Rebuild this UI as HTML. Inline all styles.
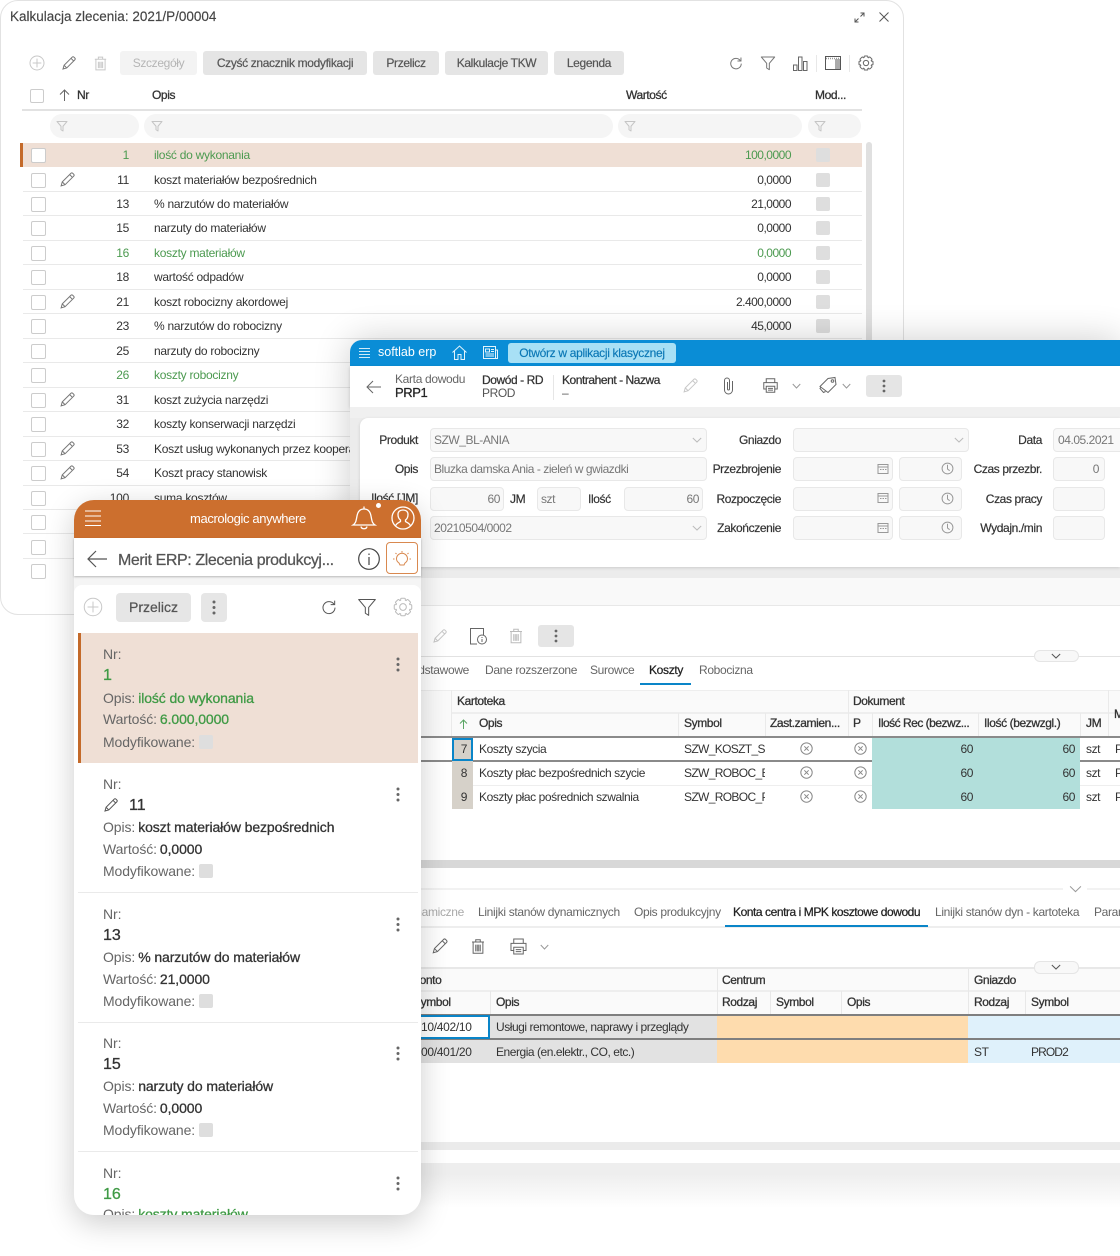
<!DOCTYPE html>
<html lang="pl"><head><meta charset="utf-8"><title>Kalkulacja zlecenia</title>
<style>
html,body{margin:0;padding:0;background:#fff}
body{position:relative;width:1120px;height:1256px;overflow:hidden;font-family:"Liberation Sans",sans-serif;font-size:12px;color:#333;letter-spacing:-.27px}
symbol *{vector-effect:non-scaling-stroke;stroke-width:1px}
.t{position:absolute;white-space:nowrap;line-height:14px;letter-spacing:-.42px}
.m{-webkit-text-stroke:.25px currentColor}
.g{color:#4c9a50}
.b{position:absolute}
.i{position:absolute;color:#777;overflow:visible}
.btn{position:absolute;top:51px;height:24px;line-height:24px;background:#e5e5e5;border-radius:3px;text-align:center;color:#555;-webkit-text-stroke:.2px #555;letter-spacing:-.35px}
.pill{position:absolute;top:114px;height:24px;background:#f5f5f5;border-radius:12px}
.r{position:absolute;left:23px;width:839px;height:24.47px;box-sizing:border-box;border-bottom:1px solid #e9e9e9}
.r .cb{position:absolute;left:8px;top:5px;width:13px;height:13px;border:1px solid #ccc;border-radius:2px;background:#fff}
.r .n{position:absolute;right:733px;top:5px;line-height:14px}
.r .o{position:absolute;left:131px;top:5px;line-height:14px;white-space:nowrap}
.r .v{position:absolute;right:71px;top:5px;line-height:14px;letter-spacing:-.5px}
.r .c{position:absolute;left:793px;top:5px;width:14px;height:14px;background:#dedede;border-radius:2px}
.r svg{position:absolute;left:36px;top:3px;width:17px;height:17px;color:#777}
.f{position:absolute;box-sizing:border-box;background:#f8f8f8;border:1px solid #e8e8e8;border-radius:4px;color:#777;line-height:22px;padding:0 3px;white-space:nowrap;letter-spacing:-.45px}
.l{position:absolute;white-space:nowrap;line-height:14px;color:#333;-webkit-text-stroke:.2px #333;letter-spacing:-.38px}
.tab{position:absolute;white-space:nowrap;line-height:14px;color:#666;letter-spacing:-.33px}
.h{position:absolute;white-space:nowrap;line-height:14px;color:#333;-webkit-text-stroke:.3px #333;letter-spacing:-.4px}
.lb{position:absolute;left:103px;white-space:nowrap;line-height:18px;font-size:14px;color:#666;letter-spacing:-.1px}
.lb span{color:#333;margin-left:3px;-webkit-text-stroke:.3px #333}
.lb .g{color:#3f9a45;-webkit-text-stroke:.3px #3f9a45}
.lb i{display:inline-block;width:14px;height:14px;background:#dedede;border-radius:2px;vertical-align:-2px;margin-left:4px}
.nv{position:absolute;left:103px;white-space:nowrap;line-height:20px;font-size:16px;color:#333;-webkit-text-stroke:.3px #333;letter-spacing:0}
.sep{position:absolute;left:78px;width:340px;height:1px;background:#eaeaea}
</style></head><body>
<svg width="0" height="0" style="position:absolute"><defs>
<symbol id="pen" viewBox="0 0 24 24"><path d="M3 21l1.600-5.600L16.700 3.300a2 2 0 0 1 2.800 0l1.200 1.200a2 2 0 0 1 0 2.800L8.600 19.400zM15 5l4 4M4.600 15.400l4 4" fill="none" stroke="currentColor"/></symbol>
<symbol id="trash" viewBox="0 0 24 24"><path d="M4 6h16M9 6V3h6v3M5.500 6v15h13V6M9 9.500v9M11 9.500v9M13 9.500v9M15 9.500v9" fill="none" stroke="currentColor"/></symbol>
<symbol id="plus" viewBox="0 0 24 24"><circle cx="12" cy="12" r="10.500" fill="none" stroke="currentColor"/><path d="M12 5.500v13M5.500 12h13" stroke="currentColor"/></symbol>
<symbol id="fil" viewBox="0 0 24 24"><path d="M2 3h20l-8 9.500V22l-4-2.500v-7z" fill="none" stroke="currentColor" stroke-linejoin="round"/></symbol>
<symbol id="ref" viewBox="0 0 24 24"><path d="M19.500 8A9 9 0 1 0 21 13" fill="none" stroke="currentColor"/><path d="M20.500 2.500V8.500H14.500" fill="none" stroke="currentColor"/></symbol>
<symbol id="gear" viewBox="0 0 24 24"><g fill="#fff" stroke="currentColor"><rect x="9.200" y="1.500" width="5.600" height="21" rx="1.200"/><rect x="9.200" y="1.500" width="5.600" height="21" rx="1.200" transform="rotate(45 12 12)"/><rect x="9.200" y="1.500" width="5.600" height="21" rx="1.200" transform="rotate(90 12 12)"/><rect x="9.200" y="1.500" width="5.600" height="21" rx="1.200" transform="rotate(135 12 12)"/></g><circle cx="12" cy="12" r="8" fill="#fff" stroke="none"/><circle cx="12" cy="12" r="4" fill="none" stroke="currentColor"/></symbol>
<symbol id="chev" viewBox="0 0 24 24" preserveAspectRatio="none"><path d="M2 4l10 16L22 4" fill="none" stroke="currentColor"/></symbol>
<symbol id="print" viewBox="0 0 24 24"><path d="M6 8V2.500h12V8M6 17H2.500V8h19v9H18M6 13h12v8.500H6zM8.500 16h7M8.500 18.500h7" fill="none" stroke="currentColor"/></symbol>
<symbol id="cal" viewBox="0 0 24 24"><path d="M2 3h20v18H2zM2 8h20" fill="none" stroke="currentColor"/><path d="M6 12h3v2H6zM11 12h3v2h-3zM16 12h3v2h-3z" fill="currentColor" stroke="none"/></symbol>
<symbol id="clk" viewBox="0 0 24 24"><circle cx="12" cy="12" r="10" fill="none" stroke="currentColor"/><path d="M12 5v8l4 3" fill="none" stroke="currentColor"/></symbol>
<symbol id="cx" viewBox="0 0 24 24"><circle cx="12" cy="12" r="10.500" fill="none" stroke="currentColor"/><path d="M8 8l8 8M16 8l-8 8" stroke="currentColor"/></symbol>
</defs></svg>

<!-- WINDOW 1 -->
<div class="b" style="left:0;top:0;width:904px;height:615px;box-sizing:border-box;border:1.500px solid #e2e2e2;border-radius:18px;background:#fff"></div>
<div class="t" style="left:10px;top:10px;font-size:13.500px;letter-spacing:0;color:#444;-webkit-text-stroke:.15px #444">Kalkulacja zlecenia: 2021/P/00004</div>
<svg class="i" style="left:854px;top:12px;width:11px;height:11px;color:#555" viewBox="0 0 11 11"><path d="M6.500 1H10V4.500M10 1L6.500 4.500M4.500 10H1V6.500M1 10L4.500 6.500" fill="none" stroke="currentColor"/></svg>
<svg class="i" style="left:879px;top:12px;width:10px;height:10px;color:#555" viewBox="0 0 10 10"><path d="M.5.500l9 9M9.500.500l-9 9" stroke="currentColor"/></svg>
<svg class="i" style="left:29px;top:55px;width:16px;height:16px;color:#c8c8c8"><use href="#plus"/></svg>
<svg class="i" style="left:61px;top:55px;width:16px;height:16px"><use href="#pen"/></svg>
<svg class="i" style="left:92px;top:55px;width:17px;height:17px;color:#c8c8c8"><use href="#trash"/></svg>
<div class="btn" style="left:120px;width:77px;background:#f3f3f3;color:#b5b5b5;-webkit-text-stroke:0">Szczegóły</div>
<div class="btn" style="left:203px;width:164px">Czyść znacznik modyfikacji</div>
<div class="btn" style="left:373px;width:66px">Przelicz</div>
<div class="btn" style="left:445px;width:103px">Kalkulacje TKW</div>
<div class="btn" style="left:554px;width:70px">Legenda</div>
<svg class="i" style="left:729px;top:56px;width:14px;height:14px"><use href="#ref"/></svg>
<svg class="i" style="left:760px;top:55px;width:16px;height:16px"><use href="#fil"/></svg>
<svg class="i" style="left:793px;top:56px;width:15px;height:15px;color:#666" viewBox="0 0 15 15"><path d="M.5 9h3.500v5.500H.5zM5.500 1h3.500v13.500H5.500zM10.500 5.500h3.500v9h-3.500z" fill="none" stroke="currentColor"/></svg>
<div class="b" style="left:816px;top:55px;width:1px;height:17px;background:#e8e8e8"></div>
<svg class="i" style="left:825px;top:56px;width:16px;height:14px;color:#555" viewBox="0 0 16 14"><rect x=".5" y=".5" width="15" height="13" fill="#fff" stroke="currentColor"/><rect x="10" y="3" width="5" height="10" fill="#aaa"/><path d="M1 2.500h14" stroke="#999" stroke-width="1.500" stroke-dasharray="1 1"/></svg>
<div class="b" style="left:849px;top:55px;width:1px;height:17px;background:#e8e8e8"></div>
<svg class="i" style="left:858px;top:55px;width:16px;height:16px;color:#666"><use href="#gear"/></svg>

<div class="b" style="left:30px;top:89px;width:14px;height:14px;box-sizing:border-box;border:1px solid #ccc;border-radius:2px"></div>
<svg class="i" style="left:59px;top:89px;width:11px;height:12px;color:#666" viewBox="0 0 11 12"><path d="M5.500 12V1M1 5.500l4.500-4.500 4.500 4.500" fill="none" stroke="currentColor"/></svg>
<div class="h" style="left:77px;top:88px">Nr</div>
<div class="h" style="left:152px;top:88px">Opis</div>
<div class="h" style="left:626px;top:88px">Wartość</div>
<div class="h" style="left:815px;top:88px">Mod...</div>
<div class="b" style="left:22px;top:109px;width:840px;height:2px;background:#e2e2e2"></div>
<div class="pill" style="left:50px;width:89px"></div>
<div class="pill" style="left:144px;width:469px"></div>
<div class="pill" style="left:618px;width:184px"></div>
<div class="pill" style="left:808px;width:53px"></div>
<svg class="i" style="left:56px;top:120px;width:12px;height:12px;color:#c5c5c5"><use href="#fil"/></svg>
<svg class="i" style="left:151px;top:120px;width:12px;height:12px;color:#c5c5c5"><use href="#fil"/></svg>
<svg class="i" style="left:624px;top:120px;width:12px;height:12px;color:#c5c5c5"><use href="#fil"/></svg>
<svg class="i" style="left:814px;top:120px;width:12px;height:12px;color:#c5c5c5"><use href="#fil"/></svg>

<div class="b" style="left:20px;top:143px;width:842px;height:24px;background:#efdfd5"></div>
<div class="b" style="left:20px;top:143px;width:3px;height:24px;background:#c46a2a"></div>
<div class="r g" style="top:143px;border:0"><div class="cb"></div><div class="n">1</div><div class="o">ilość do wykonania</div><div class="v">100,0000</div><div class="c"></div></div>
<div class="r" style="top:167.500px"><div class="cb"></div><svg><use href="#pen"/></svg><div class="n">11</div><div class="o">koszt materiałów bezpośrednich</div><div class="v">0,0000</div><div class="c"></div></div>
<div class="r" style="top:192px"><div class="cb"></div><div class="n">13</div><div class="o">% narzutów do materiałów</div><div class="v">21,0000</div><div class="c"></div></div>
<div class="r" style="top:216.400px"><div class="cb"></div><div class="n">15</div><div class="o">narzuty do materiałów</div><div class="v">0,0000</div><div class="c"></div></div>
<div class="r g" style="top:240.900px"><div class="cb"></div><div class="n">16</div><div class="o">koszty materiałów</div><div class="v">0,0000</div><div class="c"></div></div>
<div class="r" style="top:265.400px"><div class="cb"></div><div class="n">18</div><div class="o">wartość odpadów</div><div class="v">0,0000</div><div class="c"></div></div>
<div class="r" style="top:289.800px"><div class="cb"></div><svg><use href="#pen"/></svg><div class="n">21</div><div class="o">koszt robocizny akordowej</div><div class="v">2.400,0000</div><div class="c"></div></div>
<div class="r" style="top:314.300px"><div class="cb"></div><div class="n">23</div><div class="o">% narzutów do robocizny</div><div class="v">45,0000</div><div class="c"></div></div>
<div class="r" style="top:338.800px"><div class="cb"></div><div class="n">25</div><div class="o">narzuty do robocizny</div><div class="c"></div></div>
<div class="r g" style="top:363.200px"><div class="cb"></div><div class="n">26</div><div class="o">koszty robocizny</div></div>
<div class="r" style="top:387.700px"><div class="cb"></div><svg><use href="#pen"/></svg><div class="n">31</div><div class="o">koszt zużycia narzędzi</div></div>
<div class="r" style="top:412.200px"><div class="cb"></div><div class="n">32</div><div class="o">koszty konserwacji narzędzi</div></div>
<div class="r" style="top:436.600px"><div class="cb"></div><svg><use href="#pen"/></svg><div class="n">53</div><div class="o">Koszt usług wykonanych przez kooperantów</div></div>
<div class="r" style="top:461.100px"><div class="cb"></div><svg><use href="#pen"/></svg><div class="n">54</div><div class="o">Koszt pracy stanowisk</div></div>
<div class="r" style="top:485.600px"><div class="cb"></div><div class="n">100</div><div class="o">suma kosztów</div></div>
<div class="r" style="top:510px"><div class="cb"></div></div>
<div class="r" style="top:534.500px"><div class="cb"></div></div>
<div class="r" style="top:559px;border:0"><div class="cb"></div></div>
<div class="b" style="left:866px;top:142px;width:6px;height:230px;background:#e0e0e0;border-radius:3px"></div>

<!-- WINDOW 2 -->
<div class="b" style="left:350px;top:340px;width:770px;height:823px;background:#f8f8f8;border-top-left-radius:12px;box-shadow:0 0 36px rgba(0,0,0,.2)"></div>
<div class="b" style="left:350px;top:1163px;width:770px;height:11px;background:#eee"></div>
<div class="b" style="left:350px;top:1174px;width:770px;height:34px;background:linear-gradient(#eee,#fff)"></div>
<div class="b" style="left:350px;top:340px;width:770px;height:26px;background:#0a8dd6;border-top-left-radius:12px"></div>
<svg class="i" style="left:359px;top:347px;width:11px;height:12px;color:#cfeaf8" viewBox="0 0 11 12"><path d="M0 1.500h11M0 4.500h11M0 7.500h11M0 10.500h11" stroke="currentColor"/></svg>
<div class="t" style="left:378px;top:345px;color:#fff;font-size:12.500px;letter-spacing:0">softlab erp</div>
<svg class="i" style="left:452px;top:345px;width:15px;height:15px;color:#e3f4fc" viewBox="0 0 15 15"><path d="M.5 7.500L7.500 1l7 6.500M2.500 6v8.500h3.500V9.500h3v5h3.500V6" fill="none" stroke="currentColor"/></svg>
<svg class="i" style="left:483px;top:346px;width:15px;height:13px;color:#e3f4fc" viewBox="0 0 15 13"><path d="M.5.500h12v12H.5zM12.500 4h2v8.500h-2M2.500 3h4v3h-4zM8 3.500h3M8 5.500h3M2.500 8h8.500M2.500 10h8.500" fill="none" stroke="currentColor"/></svg>
<div class="b" style="left:508px;top:343px;width:168px;height:20px;background:#a8e0f5;border-radius:3px;text-align:center;line-height:20px;color:#0a77b5;-webkit-text-stroke:.15px #0a77b5;letter-spacing:-.32px">Otwórz w aplikacji klasycznej</div>

<div class="b" style="left:350px;top:366px;width:770px;height:41px;background:#fff;box-shadow:0 1px 3px rgba(0,0,0,.15)"></div>
<svg class="i" style="left:366px;top:380px;width:15px;height:14px;color:#666" viewBox="0 0 15 14"><path d="M15 7H1M7 1L1 7l6 6" fill="none" stroke="currentColor"/></svg>
<div class="t" style="left:395px;top:372px;color:#666;letter-spacing:-.33px">Karta dowodu</div>
<div class="t m" style="left:395px;top:386px;font-size:13px;color:#222">PRP1</div>
<div class="t m" style="left:482px;top:373px;color:#333">Dowód - RD</div>
<div class="t" style="left:482px;top:386px;color:#555">PROD</div>
<div class="b" style="left:553px;top:375px;width:1px;height:25px;background:#e6e6e6"></div>
<div class="t m" style="left:562px;top:373px;color:#333;letter-spacing:-.45px">Kontrahent - Nazwa</div>
<div class="t" style="left:562px;top:386px;color:#555">–</div>
<svg class="i" style="left:682px;top:377px;width:17px;height:17px;color:#c8c8c8"><use href="#pen"/></svg>
<svg class="i" style="left:722px;top:377px;width:13px;height:17px;color:#666" viewBox="0 0 13 17"><path d="M10.500 4v9a4 4 0 0 1-8 0V3.500a2.500 2.500 0 0 1 5 0V12a1 1 0 0 1-2 0V5" fill="none" stroke="currentColor"/></svg>
<svg class="i" style="left:762px;top:377px;width:17px;height:17px;color:#666"><use href="#print"/></svg>
<svg class="i" style="left:792px;top:383px;width:9px;height:6px;color:#999"><use href="#chev"/></svg>
<svg class="i" style="left:819px;top:377px;width:18px;height:16px;color:#666" viewBox="0 0 18 16"><path d="M1 9.500L9 1.500l7-1 1 7-8 8zM6.500 14.500l-2 1-3.500-4 1-1.500" fill="none" stroke="currentColor"/><circle cx="13.500" cy="4" r="1.300" fill="none" stroke="currentColor"/></svg>
<svg class="i" style="left:842px;top:383px;width:9px;height:6px;color:#999"><use href="#chev"/></svg>
<div class="b" style="left:866px;top:375px;width:36px;height:22px;background:#e5e5e5;border-radius:3px"></div>
<svg class="i" style="left:882px;top:379px;width:4px;height:14px;color:#666" viewBox="0 0 4 14"><circle cx="2" cy="2" r="1.400" fill="currentColor"/><circle cx="2" cy="7" r="1.400" fill="currentColor"/><circle cx="2" cy="12" r="1.400" fill="currentColor"/></svg>

<div class="b" style="left:350px;top:407px;width:770px;height:11px;background:#f0f0f0"></div>
<div class="b" style="left:350px;top:418px;width:770px;height:160px;background:#ececec"></div>
<div class="b" style="left:360px;top:418px;width:760px;height:149px;background:#fff;border-radius:8px 0 0 4px;box-shadow:0 1px 3px rgba(0,0,0,.14)"></div>

<div class="l" style="right:702px;top:433px">Produkt</div>
<div class="f" style="left:430px;top:428px;width:277px;height:24px">SZW_BL-ANIA</div>
<svg class="i" style="left:692px;top:437px;width:10px;height:6px;color:#bbb"><use href="#chev"/></svg>
<div class="l" style="right:702px;top:462px">Opis</div>
<div class="f" style="left:430px;top:457px;width:277px;height:24px">Bluzka damska Ania - zieleń w gwiazdki</div>
<div class="l" style="right:702px;top:491px">Ilość [JM]</div>
<div class="f" style="left:430px;top:487px;width:74px;height:24px;text-align:right">60</div>
<div class="l" style="left:510px;top:492px">JM</div>
<div class="f" style="left:537px;top:487px;width:44px;height:24px">szt</div>
<div class="l" style="left:588px;top:492px">Ilość</div>
<div class="f" style="left:624px;top:487px;width:79px;height:24px;text-align:right">60</div>
<div class="f" style="left:430px;top:516px;width:277px;height:24px">20210504/0002</div>
<svg class="i" style="left:692px;top:525px;width:10px;height:6px;color:#bbb"><use href="#chev"/></svg>

<div class="l" style="right:339px;top:433px">Gniazdo</div>
<div class="f" style="left:793px;top:428px;width:176px;height:24px"></div>
<svg class="i" style="left:954px;top:437px;width:10px;height:6px;color:#bbb"><use href="#chev"/></svg>
<div class="l" style="right:339px;top:462px">Przezbrojenie</div>
<div class="f" style="left:793px;top:457px;width:100px;height:24px"></div><div class="f" style="left:899px;top:457px;width:63px;height:24px"></div>
<div class="l" style="right:339px;top:492px">Rozpoczęcie</div>
<div class="f" style="left:793px;top:487px;width:100px;height:24px"></div><div class="f" style="left:899px;top:487px;width:63px;height:24px"></div>
<div class="l" style="right:339px;top:521px">Zakończenie</div>
<div class="f" style="left:793px;top:516px;width:100px;height:24px"></div><div class="f" style="left:899px;top:516px;width:63px;height:24px"></div>
<svg class="i" style="left:877px;top:463px;width:12px;height:12px;color:#999"><use href="#cal"/></svg>
<svg class="i" style="left:877px;top:492px;width:12px;height:12px;color:#999"><use href="#cal"/></svg>
<svg class="i" style="left:877px;top:522px;width:12px;height:12px;color:#999"><use href="#cal"/></svg>
<svg class="i" style="left:941px;top:462px;width:13px;height:13px;color:#999"><use href="#clk"/></svg>
<svg class="i" style="left:941px;top:492px;width:13px;height:13px;color:#999"><use href="#clk"/></svg>
<svg class="i" style="left:941px;top:521px;width:13px;height:13px;color:#999"><use href="#clk"/></svg>

<div class="l" style="right:78px;top:433px">Data</div>
<div class="f" style="left:1053px;top:428px;width:80px;height:24px;padding-left:4px">04.05.2021</div>
<div class="l" style="right:78px;top:462px">Czas przezbr.</div>
<div class="f" style="left:1053px;top:457px;width:52px;height:24px;text-align:right;padding-right:5px">0</div>
<div class="l" style="right:78px;top:492px">Czas pracy</div>
<div class="f" style="left:1053px;top:487px;width:52px;height:24px"></div>
<div class="l" style="right:78px;top:521px">Wydajn./min</div>
<div class="f" style="left:1053px;top:516px;width:52px;height:24px"></div>

<!-- section 2 -->
<div class="b" style="left:350px;top:578px;width:770px;height:27px;background:#f9f9f9"></div>
<div class="b" style="left:350px;top:605px;width:770px;height:255px;background:#fff"></div>
<div class="b" style="left:350px;top:605px;width:770px;height:1px;background:#e8e8e8"></div>
<svg class="i" style="left:432px;top:628px;width:16px;height:16px;color:#c8c8c8"><use href="#pen"/></svg>
<svg class="i" style="left:468px;top:627px;width:20px;height:18px;color:#666" viewBox="0 0 20 18"><path d="M9 17H2.500V1.500h13V8" fill="none" stroke="currentColor"/><circle cx="14" cy="12.500" r="4.500" fill="#fff" stroke="currentColor"/><path d="M14 12v3M14 10v1" stroke="currentColor"/></svg>
<svg class="i" style="left:507px;top:627px;width:18px;height:18px;color:#bbb"><use href="#trash"/></svg>
<div class="b" style="left:538px;top:625px;width:36px;height:22px;background:#e5e5e5;border-radius:3px"></div>
<svg class="i" style="left:554px;top:629px;width:4px;height:14px;color:#666" viewBox="0 0 4 14"><circle cx="2" cy="2" r="1.400" fill="currentColor"/><circle cx="2" cy="7" r="1.400" fill="currentColor"/><circle cx="2" cy="12" r="1.400" fill="currentColor"/></svg>
<div class="b" style="left:420px;top:656px;width:700px;height:1px;background:#e2e2e2"></div>
<div class="b" style="left:1034px;top:650px;width:45px;height:12px;box-sizing:border-box;background:#f8f8f8;border:1px solid #e5e5e5;border-radius:6px"></div>
<svg class="i" style="left:1051px;top:653px;width:10px;height:6px;color:#555"><use href="#chev"/></svg>
<div class="tab" style="right:651px;top:663px">Dane podstawowe</div>
<div class="tab" style="left:485px;top:663px">Dane rozszerzone</div>
<div class="tab" style="left:590px;top:663px">Surowce</div>
<div class="tab m" style="left:649px;top:663px;color:#222">Koszty</div>
<div class="tab" style="left:699px;top:663px">Robocizna</div>
<div class="b" style="left:640px;top:683px;width:51px;height:2px;background:#0a85c8"></div>

<div class="b" style="left:420px;top:690px;width:700px;height:46px;background:#fafafa;border-top:1px solid #eee"></div>
<div class="b" style="left:451px;top:712px;width:669px;height:1.500px;background:#eee"></div>
<div class="b" style="left:451px;top:690px;width:1px;height:47px;background:#eaeaea"></div>
<div class="b" style="left:848px;top:690px;width:1px;height:47px;background:#eaeaea"></div>
<div class="b" style="left:1108px;top:690px;width:1px;height:47px;background:#eaeaea"></div>
<div class="b" style="left:678px;top:713px;width:1px;height:24px;background:#eaeaea"></div>
<div class="b" style="left:765px;top:713px;width:1px;height:24px;background:#eaeaea"></div>
<div class="b" style="left:872px;top:713px;width:1px;height:24px;background:#eaeaea"></div>
<div class="b" style="left:978px;top:713px;width:1px;height:24px;background:#eaeaea"></div>
<div class="b" style="left:1080px;top:713px;width:1px;height:24px;background:#eaeaea"></div>
<div class="h" style="left:457px;top:694px">Kartoteka</div>
<div class="h" style="left:853px;top:694px">Dokument</div>
<div class="h" style="left:1114px;top:707px">M</div>
<svg class="i" style="left:459px;top:719px;width:9px;height:10px;color:#5aa564" viewBox="0 0 9 10"><path d="M4.500 10V1M1 4.500l3.500-3.500 3.500 3.500" fill="none" stroke="currentColor"/></svg>
<div class="h" style="left:479px;top:716px">Opis</div>
<div class="h" style="left:684px;top:716px">Symbol</div>
<div class="h" style="left:770px;top:716px">Zast.zamien...</div>
<div class="h" style="left:853px;top:716px">P</div>
<div class="h" style="left:878px;top:716px;letter-spacing:-.5px">Ilość Rec (bezwz...</div>
<div class="h" style="left:984px;top:716px">Ilość (bezwzgl.)</div>
<div class="h" style="left:1086px;top:716px">JM</div>

<div class="b" style="left:420px;top:736px;width:700px;height:2px;background:#8a8a8a"></div>
<div class="b" style="left:420px;top:760px;width:700px;height:1.500px;background:#8a8a8a"></div>
<div class="b" style="left:452px;top:738px;width:21px;height:71px;background:#d6d1c9"></div>
<div class="b" style="left:452px;top:738px;width:21px;height:23px;box-sizing:border-box;border:2px solid #0a85c8;background:#d6d1c9"></div>
<div class="b" style="left:872px;top:738px;width:208px;height:71px;background:#b2dfdb"></div>
<div class="b" style="left:473px;top:785px;width:399px;height:1px;background:#eee"></div>
<div class="b" style="left:1080px;top:785px;width:40px;height:1px;background:#eee"></div>
<div class="t" style="right:653px;top:742px">7</div><div class="t" style="right:653px;top:766px">8</div><div class="t" style="right:653px;top:790px">9</div>
<div class="t" style="left:479px;top:742px">Koszty szycia</div>
<div class="t" style="left:479px;top:766px">Koszty płac bezpośrednich szycie</div>
<div class="t" style="left:479px;top:790px">Koszty płac pośrednich szwalnia</div>
<div class="t" style="left:684px;top:742px;width:81px;overflow:hidden;letter-spacing:-.65px">SZW_KOSZT_SZW</div>
<div class="t" style="left:684px;top:766px;width:81px;overflow:hidden;letter-spacing:-.65px">SZW_ROBOC_BEZ</div>
<div class="t" style="left:684px;top:790px;width:81px;overflow:hidden;letter-spacing:-.65px">SZW_ROBOC_POS</div>
<svg class="i" style="left:800px;top:742px;width:13px;height:13px;color:#888"><use href="#cx"/></svg>
<svg class="i" style="left:800px;top:766px;width:13px;height:13px;color:#888"><use href="#cx"/></svg>
<svg class="i" style="left:800px;top:790px;width:13px;height:13px;color:#888"><use href="#cx"/></svg>
<svg class="i" style="left:854px;top:742px;width:13px;height:13px;color:#888"><use href="#cx"/></svg>
<svg class="i" style="left:854px;top:766px;width:13px;height:13px;color:#888"><use href="#cx"/></svg>
<svg class="i" style="left:854px;top:790px;width:13px;height:13px;color:#888"><use href="#cx"/></svg>
<div class="t" style="right:147px;top:742px">60</div><div class="t" style="right:147px;top:766px">60</div><div class="t" style="right:147px;top:790px">60</div>
<div class="t" style="right:45px;top:742px">60</div><div class="t" style="right:45px;top:766px">60</div><div class="t" style="right:45px;top:790px">60</div>
<div class="t" style="left:1086px;top:742px">szt</div><div class="t" style="left:1086px;top:766px">szt</div><div class="t" style="left:1086px;top:790px">szt</div>
<div class="t" style="left:1115px;top:742px">P</div><div class="t" style="left:1115px;top:766px">P</div><div class="t" style="left:1115px;top:790px">P</div>

<!-- section 3 -->
<div class="b" style="left:350px;top:860px;width:770px;height:8px;background:#d8d8d8"></div>
<div class="b" style="left:350px;top:868px;width:770px;height:275px;background:#fff"></div>
<div class="b" style="left:420px;top:888px;width:700px;height:2px;background:#f2f2f2"></div>
<div class="b" style="left:1063px;top:885px;width:24px;height:8px;background:#fff"></div>
<svg class="i" style="left:1069px;top:885px;width:13px;height:8px;color:#999"><use href="#chev"/></svg>
<div class="tab" style="right:656px;top:905px;color:#aaa">Linijki stanów dynamiczne</div>
<div class="tab" style="left:478px;top:905px">Linijki stanów dynamicznych</div>
<div class="tab" style="left:634px;top:905px">Opis produkcyjny</div>
<div class="tab m" style="left:733px;top:905px;color:#222;letter-spacing:-.44px">Konta centra i MPK kosztowe dowodu</div>
<div class="tab" style="left:935px;top:905px">Linijki stanów dyn - kartoteka</div>
<div class="tab" style="left:1094px;top:905px">Parametry</div>
<div class="b" style="left:420px;top:926px;width:700px;height:1.500px;background:#eee"></div>
<div class="b" style="left:725px;top:925px;width:203px;height:2px;background:#0a85c8"></div>
<svg class="i" style="left:431px;top:937px;width:18px;height:18px;color:#666"><use href="#pen"/></svg>
<svg class="i" style="left:469px;top:937px;width:18px;height:19px;color:#666"><use href="#trash"/></svg>
<svg class="i" style="left:509px;top:937px;width:19px;height:19px;color:#666"><use href="#print"/></svg>
<svg class="i" style="left:540px;top:944px;width:9px;height:6px;color:#999"><use href="#chev"/></svg>

<div class="b" style="left:420px;top:967px;width:700px;height:2px;background:#e8e8e8"></div>
<div class="b" style="left:420px;top:969px;width:700px;height:45px;background:#fafafa"></div>
<div class="b" style="left:420px;top:990px;width:700px;height:1.500px;background:#eee"></div>
<div class="b" style="left:717px;top:969px;width:1px;height:45px;background:#e8e8e8"></div>
<div class="b" style="left:968px;top:969px;width:1px;height:45px;background:#e8e8e8"></div>
<div class="b" style="left:490px;top:991px;width:1px;height:23px;background:#e8e8e8"></div>
<div class="b" style="left:770px;top:991px;width:1px;height:23px;background:#e8e8e8"></div>
<div class="b" style="left:841px;top:991px;width:1px;height:23px;background:#e8e8e8"></div>
<div class="b" style="left:1025px;top:991px;width:1px;height:23px;background:#e8e8e8"></div>
<div class="h" style="left:412px;top:973px">Konto</div>
<div class="h" style="left:722px;top:973px">Centrum</div>
<div class="h" style="left:974px;top:973px">Gniazdo</div>
<div class="h" style="left:413px;top:995px">Symbol</div>
<div class="h" style="left:496px;top:995px">Opis</div>
<div class="h" style="left:722px;top:995px">Rodzaj</div>
<div class="h" style="left:776px;top:995px">Symbol</div>
<div class="h" style="left:847px;top:995px">Opis</div>
<div class="h" style="left:974px;top:995px">Rodzaj</div>
<div class="h" style="left:1031px;top:995px">Symbol</div>
<div class="b" style="left:1034px;top:961px;width:45px;height:13px;box-sizing:border-box;background:#f8f8f8;border:1px solid #e5e5e5;border-radius:6px"></div>
<svg class="i" style="left:1051px;top:964px;width:10px;height:6px;color:#555"><use href="#chev"/></svg>

<div class="b" style="left:420px;top:1015px;width:297px;height:48px;background:#e2e2e2"></div>
<div class="b" style="left:717px;top:1015px;width:251px;height:48px;background:#fedcae"></div>
<div class="b" style="left:968px;top:1015px;width:152px;height:48px;background:#dff1fb"></div>
<div class="b" style="left:420px;top:1014px;width:700px;height:1.500px;background:#7f7f7f"></div>
<div class="b" style="left:420px;top:1038px;width:700px;height:1.500px;background:#7f7f7f"></div>
<div class="b" style="left:420px;top:1015px;width:70px;height:24px;box-sizing:border-box;background:#fff;border:2px solid #0a85c8;border-left:0"></div>
<div class="t" style="left:421px;top:1020px;letter-spacing:-.3px">10/402/10</div>
<div class="t" style="left:496px;top:1020px;letter-spacing:-.46px">Usługi remontowe, naprawy i przeglądy</div>
<div class="t" style="left:421px;top:1045px;letter-spacing:-.3px">00/401/20</div>
<div class="t" style="left:496px;top:1045px;letter-spacing:-.46px">Energia (en.elektr., CO, etc.)</div>
<div class="t" style="left:974px;top:1045px">ST</div>
<div class="t" style="left:1031px;top:1045px;letter-spacing:-.9px">PROD2</div>
<div class="b" style="left:350px;top:1142px;width:770px;height:8px;background:#ebebeb"></div>
<div class="b" style="left:350px;top:1150px;width:770px;height:13px;background:#fff"></div>

<!-- MOBILE -->
<div class="b" style="left:74px;top:500px;width:347px;height:715px;background:#f5f5f5;border-radius:20px;box-shadow:0 8px 30px rgba(0,0,0,.2)"></div>
<div class="b" style="left:74px;top:500px;width:347px;height:38px;background:#cc6f2e;border-radius:20px 20px 0 0"></div>
<svg class="i" style="left:85px;top:510px;width:16px;height:16px;color:#fff" viewBox="0 0 16 16"><path d="M0 1h16M0 6h16M0 11h16M0 15.500h16" stroke="currentColor"/></svg>
<div class="t" style="left:190px;top:511.500px;font-size:13px;color:#fff;letter-spacing:-.37px">macrologic anywhere</div>
<svg class="i" style="left:352px;top:505px;width:24px;height:26px;color:#fff" viewBox="0 0 24 26"><path d="M1 20c3-2 3-4 4-9 .8-4.500 3-7 7-7s6.200 2.500 7 7c1 5 1 7 4 9zM9 21.500c.5 3 5.500 3 6 0M12 4V1.500" fill="none" stroke="currentColor" stroke-width="1.300"/></svg>
<div class="b" style="left:375.500px;top:502.500px;width:5px;height:5px;background:#fff;border-radius:50%"></div>
<svg class="i" style="left:391px;top:506px;width:24px;height:24px;color:#fff" viewBox="0 0 24 24"><circle cx="12" cy="12" r="11" fill="none" stroke="currentColor" stroke-width="1.300"/><path d="M4.500 20c1-3 4-3.500 5-4.500v-1.500c-1.500-1-2.500-3-2.500-5.500 0-3 2-4.500 5-4.500s5 1.500 5 4.500c0 2.500-1 4.500-2.500 5.500v1.500c1 1 4 1.500 5 4.500" fill="none" stroke="currentColor" stroke-width="1.300"/></svg>

<div class="b" style="left:74px;top:538px;width:347px;height:38px;background:#fff;box-shadow:0 1px 2px rgba(0,0,0,.25)"></div>
<svg class="i" style="left:87px;top:550px;width:20px;height:18px;color:#555" viewBox="0 0 20 18"><path d="M20 9H1M9 1L1 9l8 8" fill="none" stroke="currentColor" stroke-width="1.200"/></svg>
<div class="t m" style="left:118px;top:552px;font-size:16px;line-height:18px;color:#555;letter-spacing:-.4px">Merit ERP: Zlecenia produkcyj...</div>
<svg class="i" style="left:358px;top:548px;width:22px;height:22px;color:#444" viewBox="0 0 22 22"><circle cx="11" cy="11" r="10.300" fill="none" stroke="currentColor" stroke-width="1.200"/><path d="M11 9v8M11 5.500v1.500" stroke="currentColor" stroke-width="1.200"/></svg>
<div class="b" style="left:386px;top:542px;width:32px;height:32px;box-sizing:border-box;border:1px solid #d9894f;border-radius:4px"></div>
<svg class="i" style="left:393px;top:550px;width:18px;height:18px;color:#d9894f" viewBox="0 0 18 18"><path d="M6 13c-1.500-1-2.500-2.500-2.500-4.200a5.500 5.500 0 0 1 11 0C14.500 10.500 13.500 12 12 13l-1 2H7zM9 1v1.500M2.500 3l1 1M15.500 3l-1 1M0 9h1.500M16.500 9H18" fill="none" stroke="currentColor"/></svg>

<div class="b" style="left:74px;top:585px;width:347px;height:630px;background:#fff;border-radius:8px 8px 20px 20px"></div>
<svg class="i" style="left:83px;top:597px;width:20px;height:20px;color:#c8c8c8"><use href="#plus"/></svg>
<div class="b m" style="left:116px;top:593px;width:75px;height:29px;line-height:29px;text-align:center;font-size:14px;background:#e6e6e6;border-radius:4px;color:#555;letter-spacing:0">Przelicz</div>
<div class="b" style="left:201px;top:593px;width:26px;height:29px;background:#e6e6e6;border-radius:4px"></div>
<svg class="i" style="left:212px;top:600px;width:4px;height:15px;color:#666" viewBox="0 0 4 15"><circle cx="2" cy="2" r="1.500" fill="currentColor"/><circle cx="2" cy="7.500" r="1.500" fill="currentColor"/><circle cx="2" cy="13" r="1.500" fill="currentColor"/></svg>
<svg class="i" style="left:321px;top:599px;width:16px;height:16px;color:#555"><use href="#ref"/></svg>
<svg class="i" style="left:357px;top:597px;width:20px;height:20px;color:#555"><use href="#fil"/></svg>
<svg class="i" style="left:393px;top:597px;width:20px;height:20px;color:#bbb"><use href="#gear"/></svg>

<div class="b" style="left:78px;top:633px;width:340px;height:130px;background:#efdfd5"></div>
<div class="b" style="left:78px;top:633px;width:3px;height:130px;background:#c46a2a"></div>
<div class="lb" style="top:645px">Nr:</div><div class="nv" style="top:666px;color:#3f9a45;-webkit-text-stroke-color:#3f9a45">1</div>
<div class="lb" style="top:689px">Opis:<span class="g">ilość do wykonania</span></div>
<div class="lb" style="top:710px">Wartość:<span class="g">6.000,0000</span></div>
<div class="lb" style="top:733px">Modyfikowane:<i></i></div>

<div class="lb" style="top:775px">Nr:</div><svg class="i" style="left:103px;top:797px;width:16px;height:16px;color:#555"><use href="#pen"/></svg><div class="nv" style="left:129px;top:796px">11</div>
<div class="lb" style="top:818px">Opis:<span>koszt materiałów bezpośrednich</span></div>
<div class="lb" style="top:840px">Wartość:<span>0,0000</span></div>
<div class="lb" style="top:862px">Modyfikowane:<i></i></div>
<div class="sep" style="top:892px"></div>

<div class="lb" style="top:905px">Nr:</div><div class="nv" style="top:926px">13</div>
<div class="lb" style="top:948px">Opis:<span>% narzutów do materiałów</span></div>
<div class="lb" style="top:970px">Wartość:<span>21,0000</span></div>
<div class="lb" style="top:992px">Modyfikowane:<i></i></div>
<div class="sep" style="top:1022px"></div>

<div class="lb" style="top:1034px">Nr:</div><div class="nv" style="top:1055px">15</div>
<div class="lb" style="top:1077px">Opis:<span>narzuty do materiałów</span></div>
<div class="lb" style="top:1099px">Wartość:<span>0,0000</span></div>
<div class="lb" style="top:1121px">Modyfikowane:<i></i></div>
<div class="sep" style="top:1151px"></div>

<div class="lb" style="top:1164px">Nr:</div><div class="nv" style="top:1185px;color:#3f9a45;-webkit-text-stroke-color:#3f9a45">16</div>
<div class="b" style="left:74px;top:1200px;width:347px;height:15px;overflow:hidden"><div class="lb" style="left:29px;top:5px">Opis:<span class="g">koszty materiałów</span></div></div>

<svg class="i" style="left:396px;top:657px;width:4px;height:15px;color:#666" viewBox="0 0 4 15"><circle cx="2" cy="2" r="1.500" fill="currentColor"/><circle cx="2" cy="7.500" r="1.500" fill="currentColor"/><circle cx="2" cy="13" r="1.500" fill="currentColor"/></svg>
<svg class="i" style="left:396px;top:787px;width:4px;height:15px;color:#666" viewBox="0 0 4 15"><circle cx="2" cy="2" r="1.500" fill="currentColor"/><circle cx="2" cy="7.500" r="1.500" fill="currentColor"/><circle cx="2" cy="13" r="1.500" fill="currentColor"/></svg>
<svg class="i" style="left:396px;top:917px;width:4px;height:15px;color:#666" viewBox="0 0 4 15"><circle cx="2" cy="2" r="1.500" fill="currentColor"/><circle cx="2" cy="7.500" r="1.500" fill="currentColor"/><circle cx="2" cy="13" r="1.500" fill="currentColor"/></svg>
<svg class="i" style="left:396px;top:1046px;width:4px;height:15px;color:#666" viewBox="0 0 4 15"><circle cx="2" cy="2" r="1.500" fill="currentColor"/><circle cx="2" cy="7.500" r="1.500" fill="currentColor"/><circle cx="2" cy="13" r="1.500" fill="currentColor"/></svg>
<svg class="i" style="left:396px;top:1176px;width:4px;height:15px;color:#666" viewBox="0 0 4 15"><circle cx="2" cy="2" r="1.500" fill="currentColor"/><circle cx="2" cy="7.500" r="1.500" fill="currentColor"/><circle cx="2" cy="13" r="1.500" fill="currentColor"/></svg>
</body></html>
